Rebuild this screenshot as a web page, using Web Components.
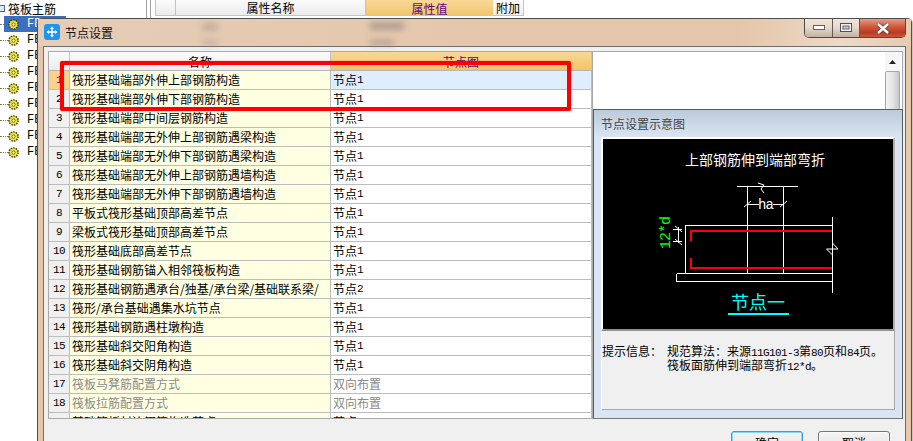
<!DOCTYPE html>
<html lang="zh">
<head>
<meta charset="utf-8">
<title>节点设置</title>
<style>
  html, body { margin: 0; height: 100%; overflow: hidden; background: #fff; }
  body { font: 12px "Noto Sans CJK SC", sans-serif; color: #000; }
</style>
</head>
<body>
<app-shell></app-shell>

<script>
// half width latin like the old bitmap font, cjk stays 12px
const LATIN = `font: 11px "Liberation Mono", monospace; letter-spacing: -.6px;`;

function mixed(text) {
  return text.replace(/[0-9A-Za-z*\-]+/g, m => `<span class="l">${m}</span>`);
}

class TreeRow extends HTMLElement {
  connectedCallback() {
    const selected = this.hasAttribute('selected');
    this.attachShadow({ mode: 'open' }).innerHTML = `
      <style>
        :host { display: block; height: 16px; }
        .row { display: flex; align-items: center; height: 16px; width: 66px; }
        .dots { width: ${selected ? 4 : 8}px; flex: none; border-top: 1px dotted #777; }
        .body { display: flex; align-items: center; height: 16px; flex: 1; gap: 8px; padding-left: ${selected ? 4 : 0}px;
                background: ${selected ? '#3d6fc0' : 'transparent'}; }
        .t { font: 12px "Liberation Mono", monospace; color: ${selected ? '#fff' : '#000'}; }
        svg { display: block; flex: none; }
      </style>
      <div class="row">
        <div class="dots"></div>
        <div class="body">
          <svg width="11" height="11" viewBox="0 0 11 11">
            <circle cx="5.5" cy="5.5" r="4.6" fill="#f1e32a" stroke="#3b3b1c" stroke-width="1.4" stroke-dasharray="1.6 1"/>
            <circle cx="5.5" cy="5.5" r="1.6" fill="#fffbd0" stroke="#55551c" stroke-width=".8"/>
          </svg>
          <span class="t">FB</span>
        </div>
      </div>`;
  }
}
customElements.define('tree-row', TreeRow);

class AppBackdrop extends HTMLElement {
  connectedCallback() {
    this.attachShadow({ mode: 'open' }).innerHTML = `
      <style>
        :host { display: flex; height: 100%; background: #fff; }
        .tree { width: 146px; height: 100%; border-right: 1px solid #a0a0a0; box-sizing: content-box; }
        .root { display: flex; align-items: center; height: 16px; gap: 3px; }
        .cb { width: 4px; height: 5px; border: 1px solid #4466a8; border-left: 0; background: #dfe8f6; }
        .gap { width: 3px; border-right: 1px solid #a0a0a0; }
        .props { flex: 1; display: flex; align-items: flex-start; padding-left: 4px; }
        .h { height: 16px; box-sizing: border-box; display: flex; align-items: center; justify-content: center; font-size: 12px; border-right: 1px solid #c4c4c4; border-bottom: 1px solid #c4c4c4; }
        .corner { width: 21px; background: linear-gradient(#fbfbfb, #ececec); border-left: 1px solid #c4c4c4; }
        .name { width: 190px; background: linear-gradient(#fbfbfb, #ececec); }
        .val { width: 127px; background: linear-gradient(#f8d898, #f2c468); color: #62007f; border: 0; }
        .extra { width: 31px; background: linear-gradient(#fbfbfb, #efefef); }
      </style>
      <div class="tree">
        <div class="root"><span class="cb"></span><span>筏板主筋</span></div>
        <tree-row selected></tree-row>
        ${'<tree-row></tree-row>'.repeat(8)}
      </div>
      <div class="gap"></div>
      <div class="props">
        <div class="h corner"></div>
        <div class="h name">属性名称</div>
        <div class="h val">属性值</div>
        <div class="h extra">附加</div>
      </div>`;
  }
}
customElements.define('app-backdrop', AppBackdrop);

class WinButtons extends HTMLElement {
  connectedCallback() {
    this.attachShadow({ mode: 'open' }).innerHTML = `
      <style>
        :host { display: flex; height: 19px; border: 1px solid #4a4a4a; border-top: 0; border-radius: 0 0 5px 5px; overflow: hidden; box-sizing: border-box; }
        div { display: flex; align-items: center; justify-content: center; height: 100%; box-sizing: border-box; }
        .min, .max { background: linear-gradient(#f1e4d8, #e8d9ca 45%, #c2b2a4); border-right: 1px solid #5a5a5a; }
        .min { width: 28px; }
        .max { width: 27px; }
        .close { width: 45px; background: linear-gradient(#e89a84, #d0563a 45%, #b83a20 75%, #c9573d); }
        svg { display: block; }
      </style>
      <div class="min"><svg width="12" height="6"><rect x=".5" y=".5" width="11" height="4" fill="#fff" stroke="#5b6175"/></svg></div>
      <div class="max"><svg width="12" height="10"><rect x=".5" y=".5" width="11" height="8" fill="#eee" stroke="#4b5165"/><rect x="3" y="3" width="6" height="3" fill="#d5c6b8" stroke="#4b5165" stroke-width=".8"/></svg></div>
      <div class="close"><svg width="14" height="11" viewBox="0 0 14 11"><path d="M2 1 L12 10 M12 1 L2 10" stroke="#4b4b55" stroke-width="4"/><path d="M2 1 L12 10 M12 1 L2 10" stroke="#fff" stroke-width="2.4"/></svg></div>`;
  }
}
customElements.define('win-buttons', WinButtons);

class GridRow extends HTMLElement {
  connectedCallback() {
    const no = this.getAttribute('no');
    const name = this.getAttribute('name');
    const value = this.getAttribute('value');
    const muted = this.hasAttribute('muted');
    const active = this.hasAttribute('active');
    this.attachShadow({ mode: 'open' }).innerHTML = `
      <style>
        :host { display: grid; grid-template-columns: 21px 261px 261px; height: 19px; box-sizing: border-box; border-bottom: 1px solid #bdbdbd; color: ${muted ? '#8a8a8a' : '#000'}; }
        div { display: flex; align-items: center; white-space: nowrap; overflow: hidden; border-right: 1px solid #bdbdbd; line-height: 18px; }
        .l { ${LATIN} }
        .no { justify-content: center; background: ${active ? '#fdd08c' : '#f0f0f0'}; color: ${active ? '#62007f' : '#000'}; ${LATIN} }
        .name { background: #ffffe2; padding-left: 2px; }
        .val { background: ${active ? '#deeeff' : '#fff'}; padding-left: 2px; }
      </style>
      <div class="no">${no}</div>
      <div class="name">${mixed(name)}</div>
      <div class="val">${mixed(value)}</div>`;
  }
}
customElements.define('grid-row', GridRow);

const ROWS = [
  ['筏形基础端部外伸上部钢筋构造', '节点1'],
  ['筏形基础端部外伸下部钢筋构造', '节点1'],
  ['筏形基础端部中间层钢筋构造', '节点1'],
  ['筏形基础端部无外伸上部钢筋遇梁构造', '节点1'],
  ['筏形基础端部无外伸下部钢筋遇梁构造', '节点1'],
  ['筏形基础端部无外伸上部钢筋遇墙构造', '节点1'],
  ['筏形基础端部无外伸下部钢筋遇墙构造', '节点1'],
  ['平板式筏形基础顶部高差节点', '节点1'],
  ['梁板式筏形基础顶部高差节点', '节点1'],
  ['筏形基础底部高差节点', '节点1'],
  ['筏形基础钢筋锚入相邻筏板构造', '节点1'],
  ['筏形基础钢筋遇承台/独基/承台梁/基础联系梁/', '节点2'],
  ['筏形/承台基础遇集水坑节点', '节点1'],
  ['筏形基础钢筋遇柱墩构造', '节点1'],
  ['筏形基础斜交阳角构造', '节点1'],
  ['筏形基础斜交阴角构造', '节点1'],
  ['筏板马凳筋配置方式', '双向布置', true],
  ['筏板拉筋配置方式', '双向布置', true],
  ['基础筏板封边钢筋构造节点', '节点1']
];

class NodeGrid extends HTMLElement {
  connectedCallback() {
    const rows = ROWS.map((r, i) =>
      `<grid-row no="${i + 1}" name="${r[0]}" value="${r[1]}"${r[2] ? ' muted' : ''}${i === 0 ? ' active' : ''}></grid-row>`).join('');
    this.attachShadow({ mode: 'open' }).innerHTML = `
      <style>
        :host { display: block; flex: none; width: 545px; height: 368px; box-sizing: border-box; border: 1px solid #a9a9a9; background: #fff; overflow: hidden; }
        .head { display: grid; grid-template-columns: 21px 261px 261px; height: 19px; box-sizing: border-box; border-bottom: 1px solid #b5b5b5; }
        .head div { display: flex; align-items: center; justify-content: center; border-right: 1px solid #c4c4c4; }
        .c { background: linear-gradient(#fbfbfb, #ececec); }
        .v { background: linear-gradient(#f8d898, #f2c468); color: #62007f; }
      </style>
      <div class="head"><div class="c"></div><div class="c">名称</div><div class="v">节点图</div></div>
      ${rows}`;
  }
}
customElements.define('node-grid', NodeGrid);

class NodeDiagram extends HTMLElement {
  connectedCallback() {
    this.attachShadow({ mode: 'open' }).innerHTML = `
      <style>
        :host { display: block; width: 290px; height: 190px; background: #000; }
        svg { display: block; shape-rendering: crispEdges; }
        text { font-family: "Noto Sans CJK SC", sans-serif; }
      </style>
      <svg width="290" height="190" viewBox="0 0 290 190" fill="none">
        <text x="82" y="26" font-size="14" fill="#fff">上部钢筋伸到端部弯折</text>
        <g stroke="#fff">
          <path d="M134 47.5H195M144.5 47.5V134M180.5 47.5V134"/>
          <path d="M82.5 134.5V86.5H229.5M73.5 134.5H229.5M73.5 142.5H229.5M73.5 134.5V142.5M229.5 78V154"/>
          <path d="M145 65H156M170 65H180M75.5 88V104M70 90.5H79M70 102.5H79"/>
        </g>
        <g stroke="#fff" shape-rendering="auto">
          <path d="M155 44 L161 46 L158 50 L161 54"/>
          <path d="M141 68 L148 62M177 68 L184 62"/>
          <path d="M72 87 L79 93M72 100 L79 106"/>
          <path d="M229.5 104 L235 110 H223.5 L229.5 116"/>
        </g>
        <text x="155" y="70" font-size="14" letter-spacing="-1" fill="#fff" style='font-family:"Liberation Mono",monospace'>ha</text>
        <g stroke="#f00" stroke-width="2">
          <path d="M88 92H229M88 129H229M88 91V102M88 119V130"/>
        </g>
        <text transform="translate(67 110) rotate(-90)" font-size="15" fill="#0f0" style='font-family:"Liberation Mono",monospace' textLength="33">12*d</text>
        <text x="128" y="170" font-size="18" fill="#0ff">节点一</text>
        <rect x="125" y="174" width="61" height="2" fill="#0ff"/>
      </svg>`;
  }
}
customElements.define('node-diagram', NodeDiagram);

class PreviewPanel extends HTMLElement {
  connectedCallback() {
    this.attachShadow({ mode: 'open' }).innerHTML = `
      <style>
        :host { display: flex; flex-direction: column; flex: none; width: 310px; height: 310px; box-sizing: border-box; border: 1px solid #5c5c5c; border-bottom: 1px solid #777; background: #d9e5f2; padding-left: 7px; }
        .cap { height: 27px; margin: 0 0 0 -7px; padding-left: 7px; flex: none; display: flex; align-items: center; color: #444; background: linear-gradient(#bccad9, #d9e5f2); }
        .pic { align-self: flex-start; border: 2px solid #fff; border-right-color: #b0b0b0; border-bottom-color: #909090; }
        .info { width: 294px; height: 79px; box-sizing: border-box; background: #f0f0f0; border: 1px solid #a8a8a8; border-top: 0; border-left-color: #fff; display: flex; padding: 14px 0 0 0; line-height: 12px; }
        .lab { width: 65px; flex: none; }
        .l { ${LATIN} }
      </style>
      <div class="cap">节点设置示意图</div>
      <div class="pic"><node-diagram></node-diagram></div>
      <div class="info">
        <div class="lab">提示信息：</div>
        <div>${mixed('规范算法：来源11G101-3第80页和84页。')}<br>${mixed('筏板面筋伸到端部弯折12*d。')}</div>
      </div>`;
  }
}
customElements.define('preview-panel', PreviewPanel);

class ScrollStub extends HTMLElement {
  connectedCallback() {
    this.attachShadow({ mode: 'open' }).innerHTML = `
      <style>
        :host { display: flex; flex-direction: column; width: 15px; height: 100%; background: #f6f6f6; }
        .btn { height: 19px; flex: none; display: flex; align-items: center; justify-content: center; }
        .thumb { flex: 1; box-sizing: border-box; border: 1px solid #a6a6a6; border-bottom: 0; border-radius: 2px 2px 0 0; background: linear-gradient(90deg, #f4f4f4, #e6e6e6 50%, #c8c8c8); }
        svg { display: block; }
      </style>
      <div class="btn"><svg width="7" height="4"><path d="M3.5 0 L7 4 H0 Z" fill="#222"/></svg></div>
      <div class="thumb"></div>`;
  }
}
customElements.define('scroll-stub', ScrollStub);

class DlgButton extends HTMLElement {
  connectedCallback() {
    const def = this.hasAttribute('default');
    this.attachShadow({ mode: 'open' }).innerHTML = `
      <style>
        :host { display: flex; justify-content: center; width: 72px; height: 24px; box-sizing: border-box; padding-top: 2px; border: 1px solid ${def ? '#3b9bd8' : '#777'}; box-shadow: ${def ? 'inset 0 0 0 1px #8fd4f5' : 'inset 0 0 0 1px #fafafa'}; border-radius: 3px; background: linear-gradient(#f4f4f4, #e2e2e2); }
      </style>
      <slot></slot>`;
  }
}
customElements.define('dlg-button', DlgButton);

class NodeDialog extends HTMLElement {
  connectedCallback() {
    this.attachShadow({ mode: 'open' }).innerHTML = `
      <style>
        :host { position: absolute; left: 37px; top: 18px; width: 875px; height: 460px; box-sizing: border-box; border: 1px solid #4f4f4f; border-bottom: 0; border-radius: 5px 5px 0 0; background: #e5c7ab; padding: 0 5px; box-shadow: 1px 0 0 #cfc2b6; display: flex; flex-direction: column; }
        .bar { position: relative; display: flex; height: 27px; flex: none; margin: 0 -5px; padding-left: 6px; background: linear-gradient(100deg, #e6cdb7, #e4c6aa 55%, #e4c6aa 80%, #efd9c6 92%, #e6cbb2); }
        .icon { margin-top: 5px; display: block; }
        .ttl { margin: 6px 0 0 5px; line-height: 15px; color: #111; }
        win-buttons { position: absolute; right: 5px; top: 0; }
        .smear { position: absolute; height: 8px; background: #8d7a78; filter: blur(3px); opacity: .55; }
        .client { flex: 1; box-sizing: border-box; border: 1px solid #6d6d6d; background: #f0f0f0; padding: 4px 3px 4px 4px; }
        .main { display: flex; height: 368px; }
        .right { display: flex; flex-direction: column; flex: none; }
        .top { height: 58px; box-sizing: border-box; background: #fff; display: flex; justify-content: flex-end; padding: 0 2px 0 0; width: 310px; border-top: 1px solid #a9a9a9; border-right: 1px solid #a9a9a9; }
        .foot { display: flex; gap: 15px; padding: 12px 0 0 683px; }
      </style>
      <div class="bar">
        <svg class="icon" width="16" height="16" viewBox="0 0 16 16">
          <rect width="16" height="16" rx="3" fill="#1e96ee"/>
          <path d="M8 2.5 L10 5 H8.7 V7.3 H11 V6 L13.5 8 L11 10 V8.7 H8.7 V11 H10 L8 13.5 L6 11 H7.3 V8.7 H5 V10 L2.5 8 L5 6 V7.3 H7.3 V5 H6 Z" fill="#fff"/>
        </svg>
        <span class="ttl">节点设置</span>
        <i class="smear" style="left:332px;top:3px;width:34px"></i>
        <i class="smear" style="left:332px;top:21px;width:24px;height:5px"></i>
        <i class="smear" style="left:164px;top:4px;width:16px;opacity:.35"></i>
        <i class="smear" style="left:164px;top:21px;width:16px;height:5px;opacity:.35"></i>
        <win-buttons></win-buttons>
      </div>
      <div class="client">
        <div class="main">
          <node-grid></node-grid>
          <div class="right">
            <div class="top"><scroll-stub></scroll-stub></div>
            <preview-panel></preview-panel>
          </div>
        </div>
        <div class="foot">
          <dlg-button default>确定</dlg-button>
          <dlg-button>取消</dlg-button>
        </div>
      </div>`;
  }
}
customElements.define('node-dialog', NodeDialog);

class RedMark extends HTMLElement {
  connectedCallback() {
    this.attachShadow({ mode: 'open' });
    this.shadowRoot.innerHTML = `
      <style>
        :host { position: absolute; left: 60px; top: 61px; width: 511px; height: 50px; box-sizing: border-box; border: 4px solid #f00; border-radius: 2px; box-shadow: 0 0 1px #f00; }
      </style>`;
  }
}
customElements.define('red-mark', RedMark);

class AppShell extends HTMLElement {
  connectedCallback() {
    this.attachShadow({ mode: 'open' }).innerHTML = `
      <style>
        :host { display: block; position: relative; width: 913px; height: 441px; overflow: hidden; }
      </style>
      <app-backdrop></app-backdrop>
      <node-dialog></node-dialog>
      <red-mark></red-mark>`;
  }
}
customElements.define('app-shell', AppShell);
</script>
</body>
</html>
